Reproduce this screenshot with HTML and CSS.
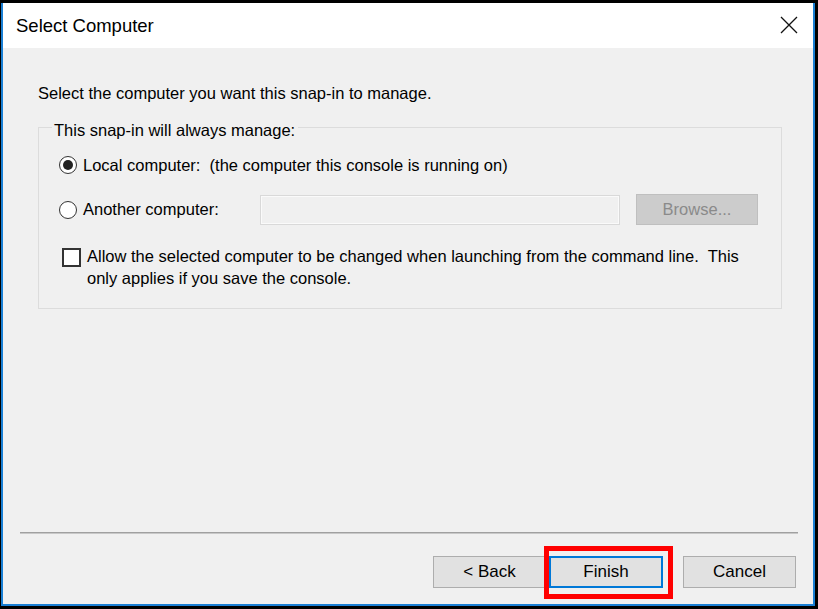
FILE: index.html
```html
<!DOCTYPE html>
<html>
<head>
<meta charset="utf-8">
<link rel="stylesheet" href="styles.css">
</head>
<body>
<div class="window">
  <div class="titlebar">
    <span class="title">Select Computer</span>
    <svg class="close" width="18" height="18" viewBox="0 0 18 18"><path d="M1 1 L17 17 M17 1 L1 17" stroke="#111" stroke-width="1.3" fill="none"/></svg>
  </div>
  <div class="content">
    <div class="main">
      <p class="intro">Select the computer you want this snap-in to manage.</p>
      <div class="group">
        <span class="legend">This snap-in will always manage:</span>
        <div class="row radio-row">
          <span class="radio checked"><span class="dot"></span></span>
          <span>Local computer:&nbsp; (the computer this console is running on)</span>
        </div>
        <div class="row other-row">
          <span class="radio"></span>
          <span class="other-label">Another computer:</span>
          <span class="textbox"></span>
          <span class="browse">Browse...</span>
        </div>
        <div class="row check-row">
          <span class="checkbox"></span>
          <span class="check-text">Allow the selected computer to be changed when launching from the command line.&nbsp; This only applies if you save the console.</span>
        </div>
      </div>
    </div>
    <div class="separator"></div>
    <div class="buttons">
      <span class="btn">&lt; Back</span>
      <span class="btn default">Finish</span>
      <span class="btn cancel">Cancel</span>
      <span class="highlight"></span>
    </div>
  </div>
</div>
</body>
</html>
```
FILE: styles.css
```css
html, body {
  margin: 0;
  padding: 0;
  background: #000;
  width: 818px;
  height: 609px;
  overflow: hidden;
}
body {
  padding: 3px 0 0 1px;
  box-sizing: border-box;
  font-family: "Liberation Sans", Arial, sans-serif;
  color: #000;
}
.window {
  width: 814px;
  height: 603px;
  box-sizing: border-box;
  border: 2px solid #1a7fd4;
  border-top: 0;
  display: flex;
  flex-direction: column;
  background: #f0f0f0;
}
.titlebar {
  height: 45px;
  background: #fff;
  display: flex;
  align-items: center;
  justify-content: space-between;
  padding: 0 15px 0 13px;
  flex: none;
}
.title {
  font-size: 18.5px;
  padding-top: 1px;
}
.close { margin-top: -1px; }
.content {
  flex: 1;
  display: flex;
  flex-direction: column;
  padding: 0 15px 0 17px;
}
.main {
  flex: 1;
  padding: 35px 16px 0 18px;
}
.intro {
  margin: 0;
  font-size: 16.5px;
  line-height: 20px;
}
.group {
  margin-top: 24px;
  border: 1px solid #dcdcdc;
  height: 182px;
  box-sizing: border-box;
  padding: 0 0 0 20px;
  font-size: 16.5px;
}
.legend {
  display: inline-block;
  background: #f0f0f0;
  line-height: 20px;
  margin: -8px 0 0 -7px;
  padding: 0 3px 0 2px;
  vertical-align: top;
}
.row {
  display: flex;
  align-items: center;
}
.radio-row { margin-top: 8px; height: 20px; gap: 6px; }
.radio {
  width: 18px;
  height: 18px;
  box-sizing: border-box;
  border: 1.5px solid #333;
  border-radius: 50%;
  background: #fff;
  display: flex;
  align-items: center;
  justify-content: center;
  flex: none;
}
.dot {
  width: 10px;
  height: 10px;
  border-radius: 50%;
  background: #222;
}
.other-row { margin-top: 19px; height: 31px; gap: 6px; }
.other-label { width: 171px; }
.textbox {
  width: 360px;
  height: 30px;
  box-sizing: border-box;
  border: 1px solid #d9d9d9;
  box-shadow: inset 0 0 0 1px #fafafa;
  background: #f0f0f0;
}
.browse {
  margin-left: 10px;
  width: 122px;
  height: 31px;
  box-sizing: border-box;
  border: 1px solid #bfbfbf;
  background: #cccccc;
  color: #8a8a8a;
  display: flex;
  align-items: center;
  justify-content: center;
}
.check-row { margin-top: 20px; align-items: flex-start; gap: 6px; }
.checkbox {
  margin: 3px 0 0 3px;
  width: 19px;
  height: 19px;
  box-sizing: border-box;
  border: 2px solid #333;
  background: #fff;
  flex: none;
}
.check-text {
  line-height: 22px;
  width: 665px;
}
.separator {
  height: 0;
  border-top: 1px solid #a0a0a0;
  border-bottom: 1px solid #c8c8c8;
  flex: none;
}
.buttons {
  position: relative;
  display: flex;
  justify-content: flex-end;
  padding: 22px 2px 16px 0;
  font-size: 17px;
}
.btn {
  width: 113px;
  height: 32px;
  box-sizing: border-box;
  border: 1px solid #adadad;
  background: #e1e1e1;
  display: flex;
  align-items: center;
  justify-content: center;
  margin-left: 3px;
}
.btn.default {
  border: 2px solid #0078d7;
  width: 114px;
}
.btn.cancel { margin-left: 20px; }
.highlight {
  position: absolute;
  right: 125px;
  top: 12px;
  width: 129px;
  height: 53px;
  box-sizing: border-box;
  border: 5px solid #ff0000;
}
```
